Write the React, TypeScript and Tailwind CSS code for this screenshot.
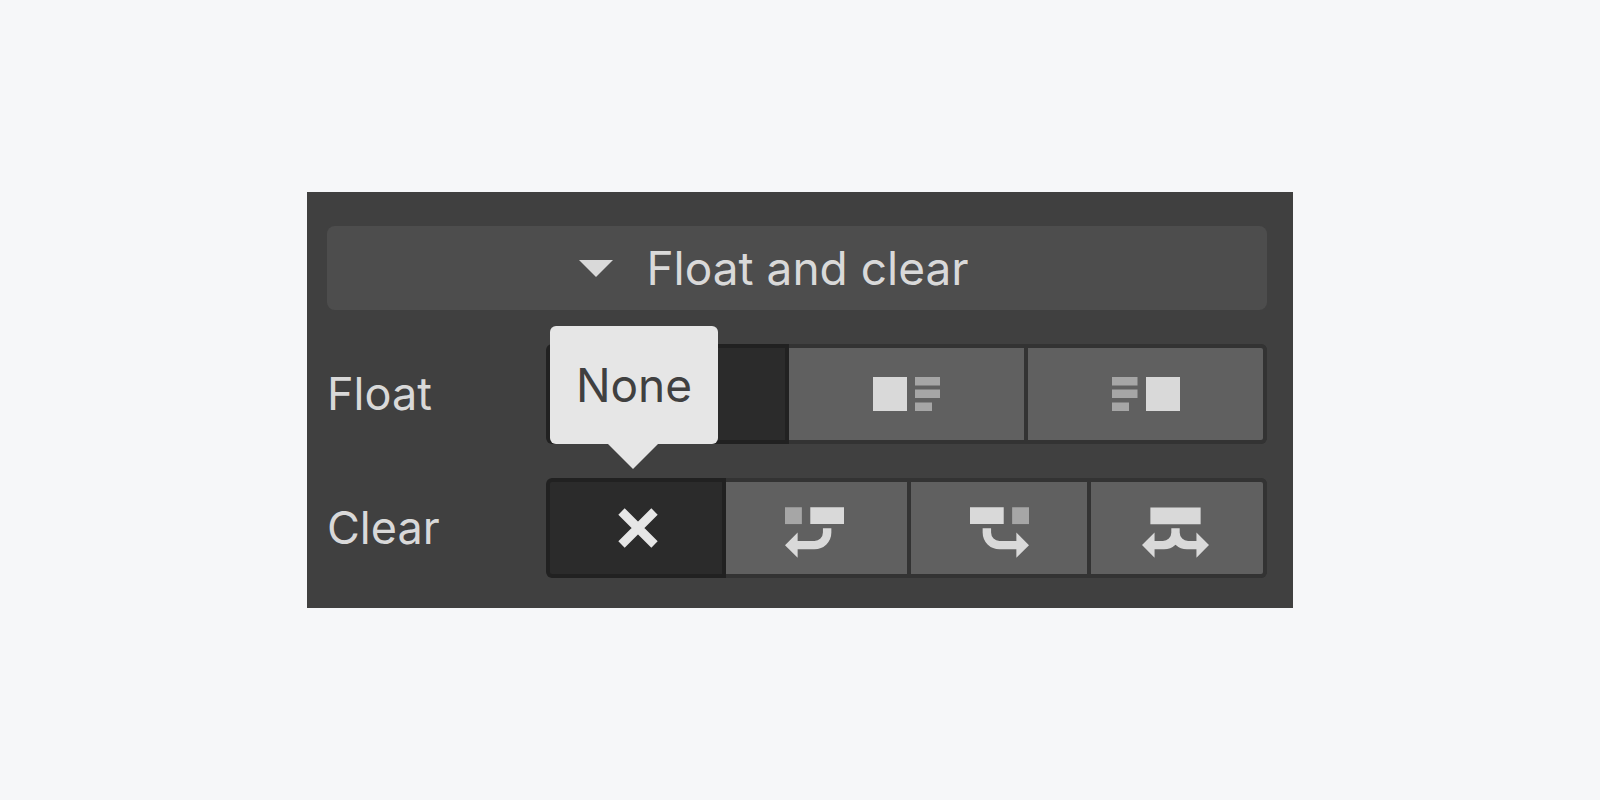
import React, { useState } from 'react';

type Option = {
  value: string;
  label: string;
  icon: React.ReactNode;
};

const NoneIcon = () => (
  <svg width="40" height="40" viewBox="0 0 40 40" fill="none" stroke="#e6e6e6" strokeWidth="9" aria-hidden="true">
    <path d="M3.5 3.5 36.5 36.5M36.5 3.5 3.5 36.5" />
  </svg>
);

const FloatLeftIcon = () => (
  <svg width="68" height="34" viewBox="0 0 68 34" aria-hidden="true">
    <path fill="#d9d9d9" d="M0 0h34v34H0z" />
    <path fill="#a6a6a6" d="M42 0h25v8.5H42zM42 12.5h25V21H42zM42 25.5h17V34H42z" />
  </svg>
);

const FloatRightIcon = () => (
  <svg width="68" height="34" viewBox="0 0 68 34" aria-hidden="true">
    <path fill="#a6a6a6" d="M0 0h25.5v8.5H0zM0 12.5h25.5V21H0zM0 25.5h17V34H0z" />
    <path fill="#d9d9d9" d="M34 0h34v34H34z" />
  </svg>
);

const ClearLeftIcon = () => (
  <svg width="59" height="51" viewBox="0 0 14 12" aria-hidden="true">
    <path fill="#a6a6a6" d="M0 0h4v4H0z" />
    <path fill="#d9d9d9" d="M6 0h8v4H6zM9 5h2v1a4 4 0 0 1-4 4H3v2L0 9l3-3v2h4a2 2 0 0 0 2-2z" />
  </svg>
);

const ClearRightIcon = () => (
  <svg width="59" height="51" viewBox="0 0 14 12" aria-hidden="true">
    <path fill="#a6a6a6" d="M10 0h4v4h-4z" />
    <path fill="#d9d9d9" d="M0 0h8v4H0zM5 5H3v1a4 4 0 0 0 4 4h4v2l3-3-3-3v2H7a2 2 0 0 1-2-2z" />
  </svg>
);

const ClearBothIcon = () => (
  <svg width="67" height="51" viewBox="0 0 16 12" aria-hidden="true">
    <path
      fill="#d9d9d9"
      d="M2 0h12v4H2zM7 5h2v1a2 2 0 0 0 2 2h2V6l3 3-3 3v-2h-2a4 4 0 0 1-3-1.1A4 4 0 0 1 5 10H3v2L0 9l3-3v2h2a2 2 0 0 0 2-2z"
    />
  </svg>
);

const floatOptions: Option[] = [
  { value: 'none', label: 'None', icon: <NoneIcon /> },
  { value: 'left', label: 'Left', icon: <FloatLeftIcon /> },
  { value: 'right', label: 'Right', icon: <FloatRightIcon /> },
];

const clearOptions: Option[] = [
  { value: 'none', label: 'None', icon: <span className="pl-1"><NoneIcon /></span> },
  { value: 'left', label: 'Left', icon: <span className="pt-2 pr-1"><ClearLeftIcon /></span> },
  { value: 'right', label: 'Right', icon: <span className="pt-2"><ClearRightIcon /></span> },
  { value: 'both', label: 'Both', icon: <span className="pt-2 pr-1"><ClearBothIcon /></span> },
];

type SegmentedProps = {
  name: string;
  columns: string;
  options: Option[];
  tooltip?: string;
};

const Segmented: React.FC<SegmentedProps> = ({ name, columns, options, tooltip }) => {
  const [selected, setSelected] = useState('none');
  const id = `${name.toLowerCase()}-label`;

  return (
    <div className="flex items-center">
      <div id={id} className="w-[219px] shrink-0 text-[45px] leading-[56px] text-[#d9d9d9]">{name}</div>
      <div className="relative min-w-0 flex-1">
        <div role="group" aria-labelledby={id} className={`grid h-[100px] overflow-hidden rounded-md bg-[#333333] ${columns}`}>
          {options.map((option, index) => (
            <button
              key={option.value}
              type="button"
              aria-label={option.label}
              aria-pressed={selected === option.value}
              onClick={() => setSelected(option.value)}
              className={`flex min-w-0 items-center justify-center ${index === 0 ? 'rounded-l-md' : ''} ${
                index === options.length - 1 ? 'rounded-r-md' : ''
              } ${
                selected === option.value
                  ? 'border-4 border-[#212121] bg-[#2b2b2b]'
                  : 'border-y-4 border-r-4 border-[#333333] bg-[#606060]'
              }`}
            >
              {option.icon}
            </button>
          ))}
        </div>
        {tooltip && (
          <div
            role="tooltip"
            className="absolute bottom-[134px] left-1 z-10 flex h-[118px] w-[168px] items-center justify-center rounded-md bg-[#e6e6e6] text-[46px] leading-[56px] text-[#404040]"
          >
            {tooltip}
            <svg className="absolute top-full left-[58px]" width="50" height="25" viewBox="0 0 50 25" aria-hidden="true">
              <path fill="#e6e6e6" d="M0 0h50L25 25z" />
            </svg>
          </div>
        )}
      </div>
    </div>
  );
};

const App: React.FC = () => {
  const [open, setOpen] = useState(true);

  return (
    <main className="flex min-h-screen items-center justify-center bg-[#f6f7f9] font-['Inter',sans-serif]">
      <section className="flex w-full max-w-[986px] flex-col gap-[34px] bg-[#404040] pt-[34px] pr-[26px] pb-[30px] pl-5">
        <button
          type="button"
          aria-expanded={open}
          onClick={() => setOpen(!open)}
          className="flex h-[84px] items-center justify-center gap-[33px] rounded-lg bg-[#4d4d4d] pr-[46px] text-[46px] leading-[56px] text-[#d9d9d9]"
        >
          <svg className={open ? '' : '-rotate-90'} width="34" height="17" viewBox="0 0 34 17" aria-hidden="true">
            <path fill="#d9d9d9" d="M0 0h34L17 17z" />
          </svg>
          Float and clear
        </button>
        {open && (
          <>
            <Segmented name="Float" columns="grid-cols-[243fr_239fr_239fr]" options={floatOptions} />
            <Segmented
              name="Clear"
              columns="grid-cols-[180fr_185fr_180fr_176fr]"
              options={clearOptions}
              tooltip="None"
            />
          </>
        )}
      </section>
    </main>
  );
};

export default App;
